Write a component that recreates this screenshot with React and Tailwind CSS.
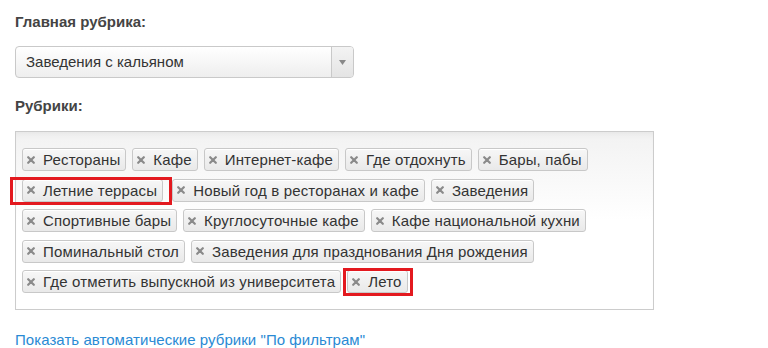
import React from "react";

const rows = [
  [{ t: "Рестораны" }, { t: "Кафе" }, { t: "Интернет-кафе" }, { t: "Где отдохнуть" }, { t: "Бары, пабы" }],
  [{ t: "Летние террасы", red: "a" }, { t: "Новый год в ресторанах и кафе", ml: "ml-[3px]" }, { t: "Заведения" }],
  [{ t: "Спортивные бары" }, { t: "Круглосуточные кафе" }, { t: "Кафе национальной кухни" }],
  [{ t: "Поминальный стол" }, { t: "Заведения для празднования Дня рождения" }],
  [{ t: "Где отметить выпускной из университета" }, { t: "Лето", red: "b" }],
];

function X() {
  return (
    <svg width="8" height="8" viewBox="0 0 8 8" className="shrink-0">
      <path d="M1.2 1.2 L6.8 6.8 M6.8 1.2 L1.2 6.8" stroke="#8a8a8a" strokeWidth="2.2" strokeLinecap="round" />
    </svg>
  );
}

function Chip({ t, red, ml }) {
  return (
    <div className={`relative ${ml || ""}`}>
      <div className="flex h-[23px] items-center gap-[8px] rounded-[3px] border border-[#c8c8c8] bg-gradient-to-b from-[#f7f7f7] to-[#e9e9e9] pl-[4px] pr-[5px] text-[15px] tracking-[0.15px] text-[#333] shadow-[inset_0_1px_0_#fff]">
        <X />
        <span className="leading-none">{t}</span>
      </div>
      {red === "a" && (
        <span className="pointer-events-none absolute -left-[12px] -right-[9px] -top-[2px] -bottom-[3px] border-[3px] border-[#e3191f]" />
      )}
      {red === "b" && (
        <span className="pointer-events-none absolute -left-[4px] -right-[5px] -top-[2px] -bottom-[3px] border-[3px] border-[#e3191f]" />
      )}
    </div>
  );
}

export default function App() {
  return (
    <div
      className="h-[348px] w-[768px] overflow-hidden bg-white pl-[15px] pt-[13px]"
      style={{ fontFamily: '"Liberation Sans", Arial, sans-serif' }}
    >
      <div className="text-[15px] font-bold leading-[18px] text-[#444]">Главная рубрика:</div>
      <div className="mt-[15px] flex h-[32px] w-[339px] overflow-hidden rounded-[4px] border border-[#c9c9c9] bg-gradient-to-b from-white to-[#eeeeee]">
        <div className="flex flex-1 items-center pl-[10px] text-[15px] text-[#333]">Заведения с кальяном</div>
        <div className="flex w-[22px] items-center justify-center border-l border-[#c9c9c9] bg-gradient-to-b from-[#f3f3f3] to-[#e4e4e4]">
          <svg width="7" height="5" viewBox="0 0 7 5">
            <path d="M0 0 H7 L3.5 5 Z" fill="#888" />
          </svg>
        </div>
      </div>
      <div className="mt-[19px] text-[15px] font-bold leading-[18px] text-[#444]">Рубрики:</div>
      <div className="mt-[16px] h-[179px] w-[639px] border border-[#cccccc] bg-gradient-to-b from-[#f2f2f2] via-white to-white pl-[6px] pt-[16px] shadow-[inset_0_6px_8px_-6px_rgba(0,0,0,0.08)]">
        <div className="flex flex-col gap-[7.5px]">
          {rows.map((r, i) => (
            <div key={i} className="flex gap-[6px]">
              {r.map((c) => (
                <Chip key={c.t} {...c} />
              ))}
            </div>
          ))}
        </div>
      </div>
      <div className="mt-[21px] text-[15px] leading-[18px] tracking-[0.05px] text-[#2a8ad4]">
        Показать автоматические рубрики "По фильтрам"
      </div>
    </div>
  );
}
